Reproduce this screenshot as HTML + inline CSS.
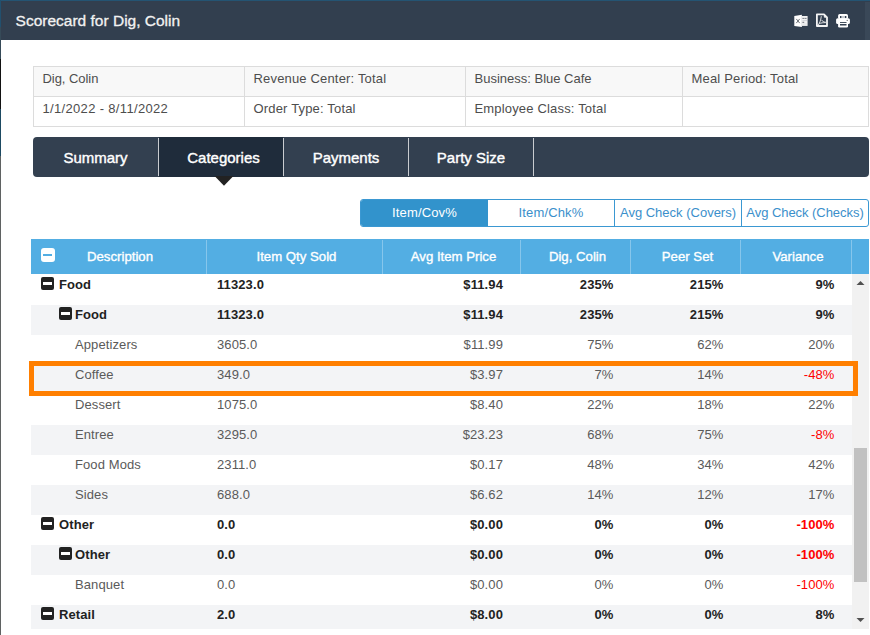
<!DOCTYPE html>
<html><head><meta charset="utf-8">
<style>
*{box-sizing:border-box;margin:0;padding:0}
html,body{width:870px;height:635px;overflow:hidden;background:#fff;font-family:"Liberation Sans",sans-serif;position:relative}
.abs{position:absolute}
#lstrip{left:0;top:0;width:1px;height:635px;background:linear-gradient(#22506e 0,#22506e 27px,#364a58 27px,#364a58 59px,#121212 59px,#121212 109px,#1d4a62 109px,#1d4a62 156px,#5f6262 156px)}
#hdr{left:1px;top:0;width:869px;height:40px;background:#323f4f;border-top:1px solid #245473}
#hdr .title{position:absolute;left:14.6px;top:10px;font-size:15.5px;color:#f2f2f2;-webkit-text-stroke:0.3px #f2f2f2;line-height:20px;white-space:nowrap}
#hdr .rs{position:absolute;left:864px;top:1px;width:5px;height:38px;background:#3a4858}
#info{left:33px;top:66px;width:836px;height:61px;border:1px solid #dcdcdc}
#info .cell{position:absolute;height:30px;font-size:13px;color:#4d4d4d;line-height:24px;padding-left:8.5px;letter-spacing:0.17px;white-space:nowrap}
#tabs{left:33px;top:137px;width:836px;height:40px;background:#334050;border-radius:4px}
#tabs .tab{position:absolute;top:0;height:40px;width:124px;text-align:center;color:#fff;font-size:15px;line-height:42px;-webkit-text-stroke:0.4px #fff}
#tabs .div{position:absolute;top:1px;width:1px;height:38px;background:#c9ccd0}
#arrow{left:215px;top:176px;width:0;height:0;border-left:9px solid transparent;border-right:9px solid transparent;border-top:10px solid #222}
#btns{left:360px;top:199px;width:509px;height:28px;border:1px solid #3b98d2;border-radius:3px;overflow:hidden}
#btns .b{position:absolute;top:0;height:26px;line-height:26px;text-align:center;font-size:13px;color:#3b8fcb;white-space:nowrap;letter-spacing:0.15px}
#btns .sep{position:absolute;top:0;width:1px;height:26px;background:#3b98d2}
#thead{left:31px;top:239px;width:838px;height:35px;background:#53aee3}
#thead .h{position:absolute;top:0;height:35px;line-height:35px;padding-left:4px;text-align:center;color:#fff;font-size:13.2px;-webkit-text-stroke:0.35px #fff;white-space:nowrap}
#thead .hs{position:absolute;top:1px;width:1px;height:34px;background:#86c6ec}
#body{left:31px;top:274px;width:821px;height:355px;overflow:hidden}
.row{position:absolute;left:0;width:821px;height:30px;font-size:13px;color:#5a5a5a;letter-spacing:0.1px}
.row.g{background:#f3f4f6}
.row.b{font-weight:bold;color:#222}
.row span{position:absolute;top:0;line-height:20px;white-space:nowrap}
.row .r{text-align:right}
.red{color:#ff0000}
.ic{position:absolute;width:13px;height:13px;background:#222;border-radius:2px}
.ic:after{content:"";position:absolute;left:2px;top:5px;width:9px;height:3px;background:#fff}
#sb{left:852px;top:274px;width:17px;height:355px;background:#f1f1f1}
#thumb{left:854px;top:448px;width:13px;height:134px;background:#c1c1c1}
#orange{left:29px;top:361px;width:829px;height:35px;border:5px solid #ff7f00}
</style></head><body>
<div id="lstrip" class="abs"></div>
<div id="hdr" class="abs">
  <div class="title">Scorecard for Dig, Colin</div>
  <svg class="abs" style="left:789px;top:9px" width="70" height="20" viewBox="0 0 70 20">
    <path d="M4.3 6 L11.9 4.8 L11.9 16.9 L4.3 15.9 Z" fill="#fff"/>
    <path d="M11.9 6 L17.6 6 L17.6 15.9 L11.9 15.9 Z" fill="#f2f2f2"/>
    <path d="M6.3 8.9 L9.7 13.1 M9.7 8.9 L6.3 13.1" stroke="#62676e" stroke-width="0.95"/>
    <path d="M12.4 8.4 h4.6" stroke="#59606a" stroke-width="0.8" stroke-dasharray="1.6 0.4"/>
    <path d="M12.4 10.6 h4.6" stroke="#c9ccd0" stroke-width="0.8"/>
    <path d="M12.4 12.3 h1.8" stroke="#59606a" stroke-width="0.9"/>
    <path d="M12.4 14 h4.6" stroke="#dadcdf" stroke-width="0.8"/>
    <path d="M26.9 4.3 L34 4.3 L37 7.3 L37 16 L26.9 16 Z" fill="none" stroke="#f4f4f4" stroke-width="1.8" stroke-linejoin="round"/>
    <path d="M34.3 5.2 L34.3 7.2 L36.2 7.2 Z" fill="#f4f4f4" stroke="#f4f4f4" stroke-width="0.8"/>
    <path d="M28.3 15 C29.6 13 30.8 10.5 31.3 6.2 M31.3 9.8 C32.3 11.2 33.8 12 35.7 12.2 M29.3 13.6 C31 12.9 33 12.6 35.8 12.6" fill="none" stroke="#e8e8e8" stroke-width="0.95"/>
    <rect x="48.1" y="4" width="9.9" height="5" rx="1.6" fill="#fff"/>
    <rect x="50" y="6" width="6.3" height="2.5" fill="#c8ccd1"/>
    <rect x="50" y="6" width="1.3" height="2.2" fill="#323f4f"/>
    <rect x="55" y="6" width="1.3" height="2.2" fill="#323f4f"/>
    <rect x="46.1" y="8.2" width="13.8" height="5.8" rx="1.6" fill="#fff"/>
    <rect x="48.1" y="11" width="9.9" height="6.4" rx="1.2" fill="#fff"/>
    <rect x="50" y="12.1" width="6.5" height="0.9" fill="#323f4f"/>
    <rect x="50" y="14" width="6.5" height="1.5" fill="#323f4f"/>
    <circle cx="57.2" cy="10.3" r="0.65" fill="#5a5f66"/>
  </svg>
  <div class="rs"></div>
</div>

<div id="info" class="abs">
  <div class="abs" style="left:0;top:0;width:834px;height:30px;background:#f8f8f8;border-bottom:1px solid #dcdcdc"></div>
  <div class="abs" style="left:210px;top:0;width:1px;height:59px;background:#dcdcdc"></div>
  <div class="abs" style="left:431px;top:0;width:1px;height:59px;background:#dcdcdc"></div>
  <div class="abs" style="left:648px;top:0;width:1px;height:59px;background:#dcdcdc"></div>
  <div class="cell" style="left:0;top:0;letter-spacing:-0.05px">Dig, Colin</div>
  <div class="cell" style="left:211px;top:0">Revenue Center: Total</div>
  <div class="cell" style="left:432px;top:0;letter-spacing:0">Business: Blue Cafe</div>
  <div class="cell" style="left:649px;top:0">Meal Period: Total</div>
  <div class="cell" style="left:0;top:30px;letter-spacing:0.33px">1/1/2022 - 8/11/2022</div>
  <div class="cell" style="left:211px;top:30px">Order Type: Total</div>
  <div class="cell" style="left:432px;top:30px">Employee Class: Total</div>
</div>

<div id="tabs" class="abs">
  <div class="abs" style="left:126px;top:0;width:124px;height:40px;background:#1f2c3b"></div>
  <div class="tab" style="left:0;width:125px">Summary</div>
  <div class="tab" style="left:126px;padding-left:5px">Categories</div>
  <div class="tab" style="left:251px">Payments</div>
  <div class="tab" style="left:376px">Party Size</div>
  <div class="div" style="left:125px"></div>
  <div class="div" style="left:250px"></div>
  <div class="div" style="left:375px"></div>
  <div class="div" style="left:500px"></div>
</div>
<svg class="abs" style="left:210px;top:176px" width="28" height="12" viewBox="0 0 28 12"><path d="M4.6 0 L23.4 0 L14 9.7 Z" fill="#222"/></svg>

<div id="btns" class="abs">
  <div class="b" style="left:0;width:127px;background:#3293cc;color:#fff">Item/Cov%</div>
  <div class="b" style="left:127px;width:126px">Item/Chk%</div>
  <div class="sep" style="left:253px"></div>
  <div class="b" style="left:254px;width:126px;letter-spacing:0">Avg Check (Covers)</div>
  <div class="sep" style="left:380px"></div>
  <div class="b" style="left:381px;width:126px;letter-spacing:-0.05px">Avg Check (Checks)</div>
</div>

<div id="thead" class="abs">
  <div class="abs" style="left:10px;top:9px;width:14px;height:14px;background:#fff;border-radius:3px"></div>
  <div class="abs" style="left:12.3px;top:15.3px;width:9px;height:1.9px;background:#53aee3"></div>
  <div class="h" style="left:0;width:175px;padding-left:3px">Description</div>
  <div class="h" style="left:176px;width:175px">Item Qty Sold</div>
  <div class="h" style="left:352px;width:137px">Avg Item Price</div>
  <div class="h" style="left:490px;width:109px">Dig, Colin</div>
  <div class="h" style="left:600px;width:109px">Peer Set</div>
  <div class="h" style="left:710px;width:110px">Variance</div>
  <div class="hs" style="left:175px"></div>
  <div class="hs" style="left:351px"></div>
  <div class="hs" style="left:489px"></div>
  <div class="hs" style="left:599px"></div>
  <div class="hs" style="left:709px"></div>
  <div class="hs" style="left:820px"></div>
</div>

<div id="body" class="abs">
<div class="row b" style="top:1px"><i class="ic" style="left:10px;top:2px"></i><span style="left:28px">Food</span><span style="left:186px">11323.0</span><span class="r" style="right:349px">$11.94</span><span class="r" style="right:238.5px">235%</span><span class="r" style="right:128.5px">215%</span><span class="r" style="right:17.5px">9%</span></div>
<div class="row g b" style="top:31px"><i class="ic" style="left:28px;top:2px"></i><span style="left:44px">Food</span><span style="left:186px">11323.0</span><span class="r" style="right:349px">$11.94</span><span class="r" style="right:238.5px">235%</span><span class="r" style="right:128.5px">215%</span><span class="r" style="right:17.5px">9%</span></div>
<div class="row" style="top:61px"><span style="left:44px">Appetizers</span><span style="left:186px">3605.0</span><span class="r" style="right:349px">$11.99</span><span class="r" style="right:238.5px">75%</span><span class="r" style="right:128.5px">62%</span><span class="r" style="right:17.5px">20%</span></div>
<div class="row g" style="top:91px"><span style="left:44px">Coffee</span><span style="left:186px">349.0</span><span class="r" style="right:349px">$3.97</span><span class="r" style="right:238.5px">7%</span><span class="r" style="right:128.5px">14%</span><span class="r red" style="right:17.5px">-48%</span></div>
<div class="row" style="top:121px"><span style="left:44px">Dessert</span><span style="left:186px">1075.0</span><span class="r" style="right:349px">$8.40</span><span class="r" style="right:238.5px">22%</span><span class="r" style="right:128.5px">18%</span><span class="r" style="right:17.5px">22%</span></div>
<div class="row g" style="top:151px"><span style="left:44px">Entree</span><span style="left:186px">3295.0</span><span class="r" style="right:349px">$23.23</span><span class="r" style="right:238.5px">68%</span><span class="r" style="right:128.5px">75%</span><span class="r red" style="right:17.5px">-8%</span></div>
<div class="row" style="top:181px"><span style="left:44px">Food Mods</span><span style="left:186px">2311.0</span><span class="r" style="right:349px">$0.17</span><span class="r" style="right:238.5px">48%</span><span class="r" style="right:128.5px">34%</span><span class="r" style="right:17.5px">42%</span></div>
<div class="row g" style="top:211px"><span style="left:44px">Sides</span><span style="left:186px">688.0</span><span class="r" style="right:349px">$6.62</span><span class="r" style="right:238.5px">14%</span><span class="r" style="right:128.5px">12%</span><span class="r" style="right:17.5px">17%</span></div>
<div class="row b" style="top:241px"><i class="ic" style="left:10px;top:2px"></i><span style="left:28px">Other</span><span style="left:186px">0.0</span><span class="r" style="right:349px">$0.00</span><span class="r" style="right:238.5px">0%</span><span class="r" style="right:128.5px">0%</span><span class="r red" style="right:17.5px">-100%</span></div>
<div class="row g b" style="top:271px"><i class="ic" style="left:28px;top:2px"></i><span style="left:44px">Other</span><span style="left:186px">0.0</span><span class="r" style="right:349px">$0.00</span><span class="r" style="right:238.5px">0%</span><span class="r" style="right:128.5px">0%</span><span class="r red" style="right:17.5px">-100%</span></div>
<div class="row" style="top:301px"><span style="left:44px">Banquet</span><span style="left:186px">0.0</span><span class="r" style="right:349px">$0.00</span><span class="r" style="right:238.5px">0%</span><span class="r" style="right:128.5px">0%</span><span class="r red" style="right:17.5px">-100%</span></div>
<div class="row g b" style="top:331px"><i class="ic" style="left:10px;top:2px"></i><span style="left:28px">Retail</span><span style="left:186px">2.0</span><span class="r" style="right:349px">$8.00</span><span class="r" style="right:238.5px">0%</span><span class="r" style="right:128.5px">0%</span><span class="r" style="right:17.5px">8%</span></div>
</div>
<div id="sb" class="abs">
  <svg class="abs" style="left:4px;top:6px" width="9" height="6" viewBox="0 0 9 6"><path d="M0.5 5 L4.5 1 L8.5 5 Z" fill="#505050"/></svg>
  <svg class="abs" style="left:4px;top:343px" width="9" height="6" viewBox="0 0 9 6"><path d="M0.5 1 L4.5 5 L8.5 1 Z" fill="#505050"/></svg>
</div>
<div id="thumb" class="abs"></div>
<div id="orange" class="abs"></div>
</body></html>
